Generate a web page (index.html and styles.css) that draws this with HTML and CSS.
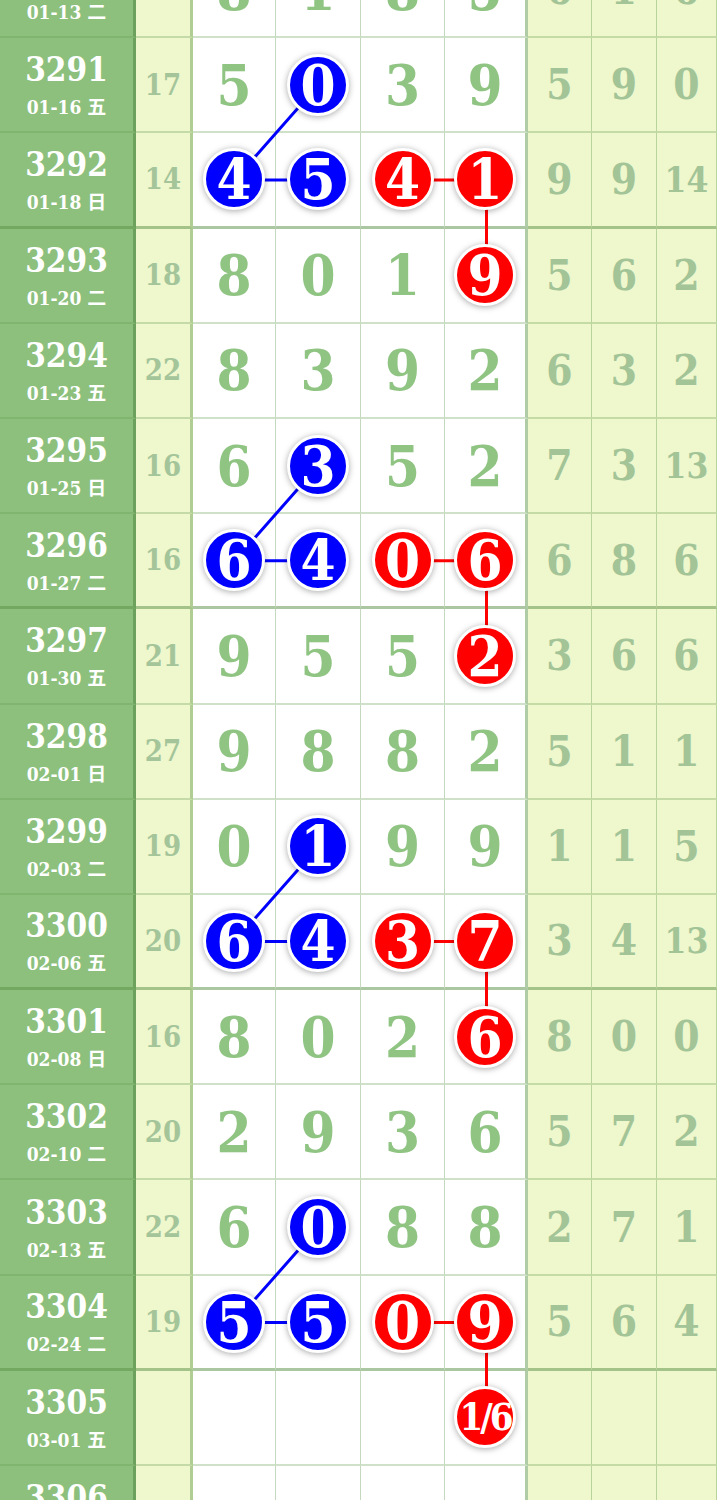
FILE: index.html
```html
<!DOCTYPE html>
<html lang="zh-CN">
<head>
    <meta charset="UTF-8">
    <meta content="width=device-width, initial-scale=1.0" name="viewport">
    <title>排列走势图</title>
    <link rel="stylesheet" href="styles.css">
</head>
<body>
<div class="chart">
    <!-- connecting lines, drawn under the balls -->
    <svg class="links" width="717" height="1620" viewBox="0 0 717 1620">
        <g stroke-width="3" fill="none">
            <path class="blue-line" d="M318.5 141.8 L234.5 237 L318.5 237"/>
            <path class="red-line" d="M403 237 L486.5 237 L486.5 332.2"/>
            <path class="blue-line" d="M318.5 522.6 L234.5 617.8 L318.5 617.8"/>
            <path class="red-line" d="M403 617.8 L486.5 617.8 L486.5 713"/>
            <path class="blue-line" d="M318.5 903.4 L234.5 998.6 L318.5 998.6"/>
            <path class="red-line" d="M403 998.6 L486.5 998.6 L486.5 1093.8"/>
            <path class="blue-line" d="M318.5 1284.2 L234.5 1379.4 L318.5 1379.4"/>
            <path class="red-line" d="M403 1379.4 L486.5 1379.4 L486.5 1474.6"/>
        </g>
    </svg>

    <div class="row">
        <div class="c issue"><b>3290</b><span>01-13 二</span></div>
        <div class="c sum">22</div>
        <div class="c d">8</div><div class="c d">1</div><div class="c d">8</div><div class="c d end">5</div>
        <div class="c x">6</div><div class="c x">1</div><div class="c x">6</div>
    </div>
    <div class="row">
        <div class="c issue"><b>3291</b><span>01-16 五</span></div>
        <div class="c sum">17</div>
        <div class="c d">5</div><div class="c d"><i class="ball blue">0</i></div><div class="c d">3</div><div class="c d end">9</div>
        <div class="c x">5</div><div class="c x">9</div><div class="c x">0</div>
    </div>
    <div class="row group-end">
        <div class="c issue"><b>3292</b><span>01-18 日</span></div>
        <div class="c sum">14</div>
        <div class="c d"><i class="ball blue">4</i></div><div class="c d"><i class="ball blue">5</i></div><div class="c d"><i class="ball red">4</i></div><div class="c d end"><i class="ball red">1</i></div>
        <div class="c x">9</div><div class="c x">9</div><div class="c x two">14</div>
    </div>
    <div class="row">
        <div class="c issue"><b>3293</b><span>01-20 二</span></div>
        <div class="c sum">18</div>
        <div class="c d">8</div><div class="c d">0</div><div class="c d">1</div><div class="c d end"><i class="ball red">9</i></div>
        <div class="c x">5</div><div class="c x">6</div><div class="c x">2</div>
    </div>
    <div class="row">
        <div class="c issue"><b>3294</b><span>01-23 五</span></div>
        <div class="c sum">22</div>
        <div class="c d">8</div><div class="c d">3</div><div class="c d">9</div><div class="c d end">2</div>
        <div class="c x">6</div><div class="c x">3</div><div class="c x">2</div>
    </div>
    <div class="row">
        <div class="c issue"><b>3295</b><span>01-25 日</span></div>
        <div class="c sum">16</div>
        <div class="c d">6</div><div class="c d"><i class="ball blue">3</i></div><div class="c d">5</div><div class="c d end">2</div>
        <div class="c x">7</div><div class="c x">3</div><div class="c x two">13</div>
    </div>
    <div class="row group-end">
        <div class="c issue"><b>3296</b><span>01-27 二</span></div>
        <div class="c sum">16</div>
        <div class="c d"><i class="ball blue">6</i></div><div class="c d"><i class="ball blue">4</i></div><div class="c d"><i class="ball red">0</i></div><div class="c d end"><i class="ball red">6</i></div>
        <div class="c x">6</div><div class="c x">8</div><div class="c x">6</div>
    </div>
    <div class="row">
        <div class="c issue"><b>3297</b><span>01-30 五</span></div>
        <div class="c sum">21</div>
        <div class="c d">9</div><div class="c d">5</div><div class="c d">5</div><div class="c d end"><i class="ball red">2</i></div>
        <div class="c x">3</div><div class="c x">6</div><div class="c x">6</div>
    </div>
    <div class="row">
        <div class="c issue"><b>3298</b><span>02-01 日</span></div>
        <div class="c sum">27</div>
        <div class="c d">9</div><div class="c d">8</div><div class="c d">8</div><div class="c d end">2</div>
        <div class="c x">5</div><div class="c x">1</div><div class="c x">1</div>
    </div>
    <div class="row">
        <div class="c issue"><b>3299</b><span>02-03 二</span></div>
        <div class="c sum">19</div>
        <div class="c d">0</div><div class="c d"><i class="ball blue">1</i></div><div class="c d">9</div><div class="c d end">9</div>
        <div class="c x">1</div><div class="c x">1</div><div class="c x">5</div>
    </div>
    <div class="row group-end">
        <div class="c issue"><b>3300</b><span>02-06 五</span></div>
        <div class="c sum">20</div>
        <div class="c d"><i class="ball blue">6</i></div><div class="c d"><i class="ball blue">4</i></div><div class="c d"><i class="ball red">3</i></div><div class="c d end"><i class="ball red">7</i></div>
        <div class="c x">3</div><div class="c x">4</div><div class="c x two">13</div>
    </div>
    <div class="row">
        <div class="c issue"><b>3301</b><span>02-08 日</span></div>
        <div class="c sum">16</div>
        <div class="c d">8</div><div class="c d">0</div><div class="c d">2</div><div class="c d end"><i class="ball red">6</i></div>
        <div class="c x">8</div><div class="c x">0</div><div class="c x">0</div>
    </div>
    <div class="row">
        <div class="c issue"><b>3302</b><span>02-10 二</span></div>
        <div class="c sum">20</div>
        <div class="c d">2</div><div class="c d">9</div><div class="c d">3</div><div class="c d end">6</div>
        <div class="c x">5</div><div class="c x">7</div><div class="c x">2</div>
    </div>
    <div class="row">
        <div class="c issue"><b>3303</b><span>02-13 五</span></div>
        <div class="c sum">22</div>
        <div class="c d">6</div><div class="c d"><i class="ball blue">0</i></div><div class="c d">8</div><div class="c d end">8</div>
        <div class="c x">2</div><div class="c x">7</div><div class="c x">1</div>
    </div>
    <div class="row group-end">
        <div class="c issue"><b>3304</b><span>02-24 二</span></div>
        <div class="c sum">19</div>
        <div class="c d"><i class="ball blue">5</i></div><div class="c d"><i class="ball blue">5</i></div><div class="c d"><i class="ball red">0</i></div><div class="c d end"><i class="ball red">9</i></div>
        <div class="c x">5</div><div class="c x">6</div><div class="c x">4</div>
    </div>
    <div class="row">
        <div class="c issue"><b>3305</b><span>03-01 五</span></div>
        <div class="c sum"></div>
        <div class="c d"></div><div class="c d"></div><div class="c d"></div><div class="c d end"><i class="ball red small">1/6</i></div>
        <div class="c x"></div><div class="c x"></div><div class="c x"></div>
    </div>
    <div class="row">
        <div class="c issue"><b>3306</b><span>03-03 日</span></div>
        <div class="c sum"></div>
        <div class="c d"></div><div class="c d"></div><div class="c d"></div><div class="c d end"></div>
        <div class="c x"></div><div class="c x"></div><div class="c x"></div>
    </div>
</div>
</body>
</html>
```

FILE: styles.css
```css
body {
    margin: 0;
    background-color: #fff;
    font-family: "DejaVu Serif Condensed", "DejaVu Serif", "Noto Sans CJK SC", serif;
    font-stretch: condensed;
    font-weight: bold;
    overflow: hidden;
}
.chart {
    position: relative;
    width: 717px;
    margin-top: -57px;
}
.links {
    position: absolute;
    left: 0;
    top: 0;
    z-index: 1;
}
.blue-line { stroke: #0000ff; }
.red-line { stroke: #ff0000; }
.row {
    display: grid;
    grid-template-columns: 136px 57px 83px 85px 84px 83px 64px 65px 60px;
    height: 95.2px;
}
.c {
    display: flex;
    align-items: center;
    justify-content: center;
    box-sizing: border-box;
    border-right: 1px solid rgba(100, 155, 80, 0.38);
    border-bottom: 2px solid rgba(100, 155, 80, 0.3);
}
.group-end .c {
    border-bottom: 3px solid rgba(90, 145, 70, 0.5);
}
.issue {
    flex-direction: column;
    background-color: #8dc07d;
    color: #fff;
    border-right: 3px solid rgba(70, 125, 55, 0.45);
}
.issue b {
    font-size: 33px;
    line-height: 36px;
    margin-top: 2px;
}
.issue span {
    font-size: 19px;
    line-height: 24px;
    margin-top: 7px;
}
.sum {
    background-color: #eff7cc;
    color: #a4c59a;
    font-size: 29px;
    border-right: 3px solid rgba(100, 155, 80, 0.45);
}
.d {
    background-color: #fff;
    color: #8fc482;
    font-size: 56px;
}
.d.end {
    border-right: 3px solid rgba(100, 155, 80, 0.5);
}
.x {
    background-color: #eff7cc;
    color: #a2c497;
    font-size: 42px;
}
.x.two {
    font-size: 35px;
}
.ball {
    position: relative;
    z-index: 2;
    display: flex;
    align-items: center;
    justify-content: center;
    width: 56px;
    height: 56px;
    border: 3px solid #fff;
    border-radius: 50%;
    box-shadow: 0 1px 6px rgba(0, 0, 0, 0.35);
    color: #fff;
    font-style: normal;
    font-size: 56px;
    line-height: 1;
}
.ball.blue { background-color: #0000ff; }
.ball.red { background-color: #ff0000; }
.ball.small {
    font-size: 38px;
    letter-spacing: -3px;
}
```
